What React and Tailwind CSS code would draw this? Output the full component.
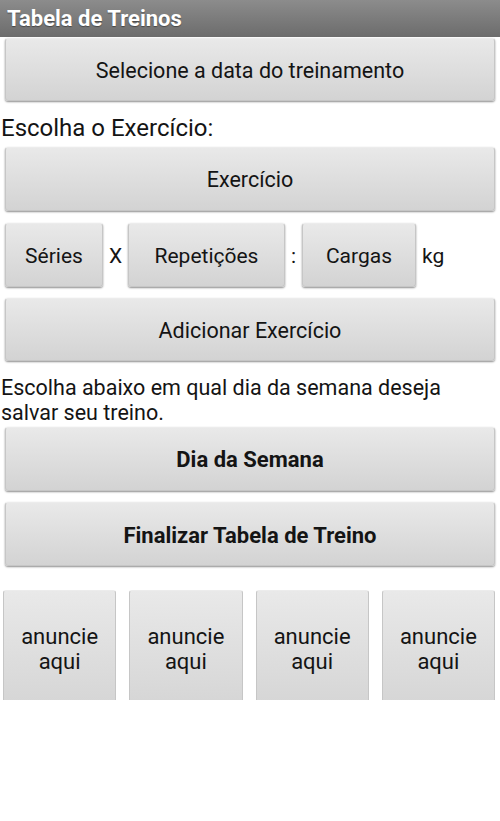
import React from "react";

const font = { fontFamily: "Roboto, 'Noto Sans', sans-serif" };

function Btn({ children, className = "" }) {
  return (
    <div
      className={
        "flex items-center justify-center rounded-[3px] border border-[#c6c6c6] border-t-[#ececec] bg-gradient-to-b from-[#e9e9e9] to-[#d3d3d3] text-[#141414] shadow-[0_1px_2px_rgba(0,0,0,0.45)] " +
        className
      }
    >
      {children}
    </div>
  );
}

export default function App() {
  return (
    <div className="w-[500px] h-[821px] bg-white overflow-hidden" style={font}>
      <div className="h-[37px] bg-gradient-to-b from-[#8c8c8c] to-[#6c6c6c] flex items-center pl-[7px]">
        <span className="text-white font-bold text-[22px] leading-none [text-shadow:0_1px_1px_rgba(0,0,0,0.4)]">
          Tabela de Treinos
        </span>
      </div>

      <Btn className="mt-[1px] mx-[5px] h-[63px] pt-[4px] text-[21.5px]">Selecione a data do treinamento</Btn>

      <div className="h-[46px] flex items-center pl-[1px] text-[24px] text-[#141414] pt-[8px]">
        Escolha o Exercício:
      </div>

      <Btn className="mx-[5px] h-[64px] pt-[3px] text-[21.5px]">Exercício</Btn>

      <div className="mt-[12px] flex items-center h-[64px] pl-[5px] pt-[3px] text-[21px] text-[#141414]">
        <Btn className="w-[98px] h-[64px] -mt-[3px] pt-[3px]">Séries</Btn>
        <span className="w-[25px] text-center">X</span>
        <Btn className="w-[157px] h-[64px] -mt-[3px] pt-[3px]">Repetições</Btn>
        <span className="w-[17px] text-center">:</span>
        <Btn className="w-[114px] h-[64px] -mt-[3px] pt-[3px]">Cargas</Btn>
        <span className="ml-[6px]">kg</span>
      </div>

      <Btn className="mt-[11px] mx-[5px] h-[63px] pt-[3px] text-[21.5px]">Adicionar Exercício</Btn>

      <div className="pt-[14px] pl-[1px] pr-[20px] text-[21.5px] leading-[25px] text-[#141414] h-[66px]">
        Escolha abaixo em qual dia da semana deseja salvar seu treino.
      </div>

      <Btn className="mx-[5px] h-[64px] pt-[1px] text-[22px] font-bold">Dia da Semana</Btn>

      <Btn className="mt-[11px] mx-[5px] h-[64px] pt-[2px] text-[22px] font-bold">Finalizar Tabela de Treino</Btn>

      <div className="mt-[24px] h-[110px] overflow-hidden flex gap-[13px] pl-[3px] pr-[5px] text-[22px] leading-[25px]">
        {[0, 1, 2, 3].map((i) => (
          <div
            key={i}
            className="flex-1 h-[130px] rounded-[3px] border border-[#c6c6c6] border-t-[#ececec] bg-gradient-to-b from-[#e9e9e9] to-[#d3d3d3] text-[#141414] flex flex-col items-center pt-[33px]"
          >
            <span>anuncie</span>
            <span>aqui</span>
          </div>
        ))}
      </div>
    </div>
  );
}
